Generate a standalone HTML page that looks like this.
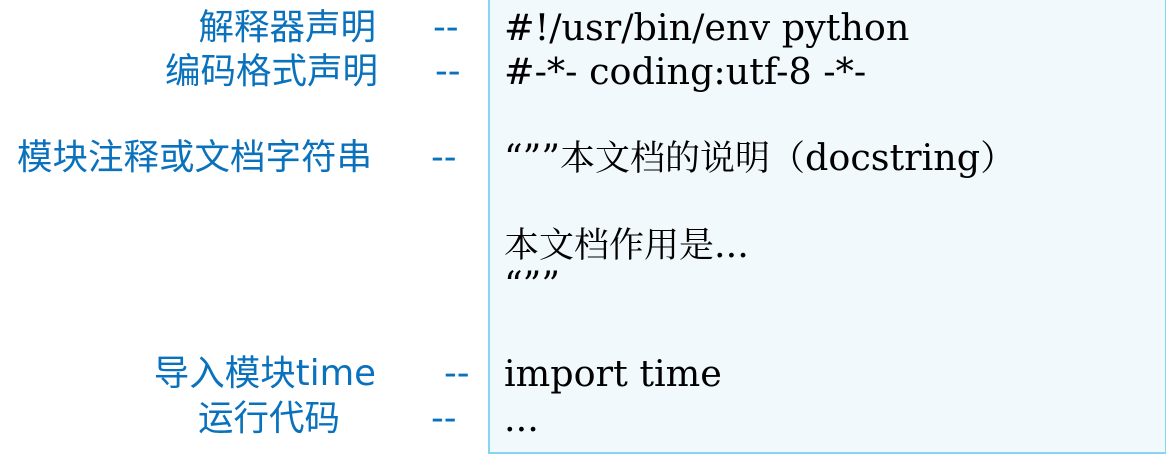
<!DOCTYPE html>
<html><head><meta charset="utf-8"><style>
body{margin:0;width:1166px;height:453px;background:#fff;position:relative;overflow:hidden}
.box{position:absolute;left:488px;top:-2px;width:675px;height:452px;border:2px solid #86d4f2;background:#f2f9fd}
.l{position:absolute;color:#0a72bd;font-family:"DejaVu Sans","Noto Sans CJK SC",sans-serif;font-size:35.5px;line-height:40px;white-space:nowrap}
.r{text-align:right}
.c{position:absolute;left:504px;color:#000;font-family:"DejaVu Serif","Noto Serif CJK SC",serif;font-size:36.5px;line-height:40px;white-space:nowrap}
.k{font-size:35px}
</style></head><body>
<div class="box"></div>
<div class="l r" style="right:790px;top:8px">解释器声明</div>
<div class="l r" style="right:788px;top:52px">编码格式声明</div>
<div class="l r" style="right:794px;top:138px">模块注释或文档字符串</div>
<div class="l r" style="right:790px;top:354px">导入模块time</div>
<div class="l r" style="right:826px;top:399px">运行代码</div>
<div class="l" style="left:433px;top:8px">--</div>
<div class="l" style="left:435px;top:52px">--</div>
<div class="l" style="left:431px;top:138px">--</div>
<div class="l" style="left:444px;top:354px">--</div>
<div class="l" style="left:431px;top:399px">--</div>
<div class="c" style="top:8px">#!/usr/bin/env python</div>
<div class="c" style="top:52px">#-*- coding:utf-8 -*-</div>
<div class="c" style="top:138px">“””<span class="k">本文档的说明（</span>docstring<span class="k">）</span></div>
<div class="c" style="top:225px"><span class="k">本文档作用是</span>...</div>
<div class="c" style="top:265px">“””</div>
<div class="c" style="top:354px">import time</div>
<div class="c" style="top:399px">...</div>
</body></html>
